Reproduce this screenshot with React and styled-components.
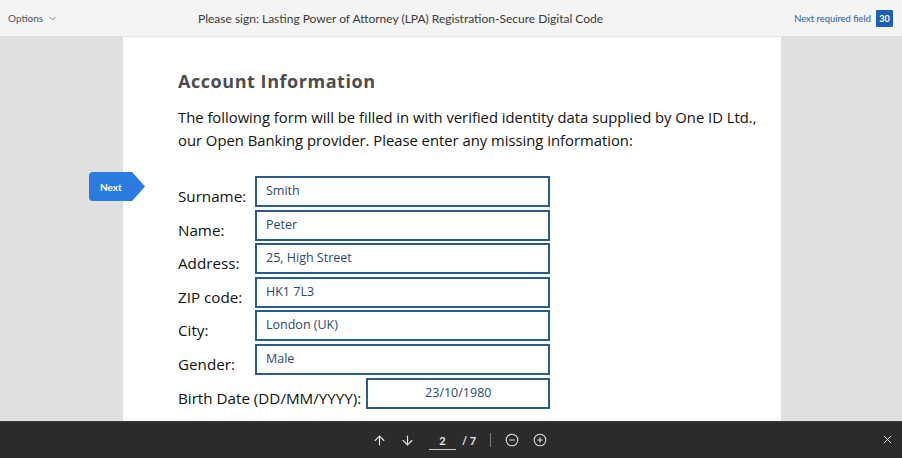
import React from "react";
import styled, { createGlobalStyle } from "styled-components";
import { ArrowUp, ArrowDown, CircleMinus, CirclePlus, X, ChevronDown } from "lucide-react";

const GlobalStyle = createGlobalStyle`
  html, body {
    margin: 0;
    padding: 0;
    width: 902px;
    height: 458px;
    overflow: hidden;
    font-family: Lato, "Open Sans", sans-serif;
  }
`;

const fields = [
  { label: "Surname:", value: "Smith" },
  { label: "Name:", value: "Peter" },
  { label: "Address:", value: "25, High Street" },
  { label: "ZIP code:", value: "HK1 7L3" },
  { label: "City:", value: "London (UK)" },
  { label: "Gender:", value: "Male" },
];

const App = () => {
  return (
    <Shell>
      <GlobalStyle />

      {/* ---------------- TOP BAR ---------------- */}
      <TopBar>
        <Options>
          Options <ChevronDown size={11} strokeWidth={1.6} />
        </Options>
        <Title>Please sign: Lasting Power of Attorney (LPA) Registration-Secure Digital Code</Title>
        <NextField>
          Next required field <Badge>30</Badge>
        </NextField>
      </TopBar>

      {/* ---------------- DOCUMENT ---------------- */}
      <Viewer>
        <Sheet>
          <Heading>Account Information</Heading>
          <Intro>
            The following form will be filled in with verified identity data supplied by One ID Ltd.,
            our Open Banking provider. Please enter any missing information:
          </Intro>

          <Form>
            <NextTag>Next</NextTag>
            {fields.map((f) => (
              <Row key={f.label}>
                <Label>{f.label}</Label>
                <Field>{f.value}</Field>
              </Row>
            ))}
            <Row>
              <Label $wide>Birth Date (DD/MM/YYYY):</Label>
              <Field $center $width={184}>23/10/1980</Field>
            </Row>
          </Form>
        </Sheet>
      </Viewer>

      {/* ---------------- BOTTOM BAR ---------------- */}
      <BottomBar>
        <Controls>
          <IconBtn><ArrowUp size={15} strokeWidth={1.8} /></IconBtn>
          <IconBtn><ArrowDown size={15} strokeWidth={1.8} /></IconBtn>
          <PageBox>2</PageBox>
          <PageTotal>/ 7</PageTotal>
          <Divider />
          <IconBtn><CircleMinus size={14} strokeWidth={1.8} /></IconBtn>
          <IconBtn><CirclePlus size={14} strokeWidth={1.8} /></IconBtn>
        </Controls>
        <Close><X size={13} strokeWidth={1.8} /></Close>
      </BottomBar>
    </Shell>
  );
};

const Shell = styled.div`
  width: 902px;
  height: 458px;
  display: flex;
  flex-direction: column;
  background: #e0e0e0;
`;

/* ================= TOP BAR ================= */
const TopBar = styled.div`
  height: 36px;
  flex-shrink: 0;
  background: #f4f4f4;
  border-bottom: 1px solid #e4e4e4;
  display: flex;
  align-items: center;
  padding: 0 9px 0 8px;
`;

const Options = styled.div`
  font-size: 10px;
  color: #555;
  display: flex;
  align-items: center;
  gap: 4px;
  width: 190px;
`;

const Title = styled.div`
  flex: 1;
  font-size: 12px;
  color: #3a3a3a;
  white-space: nowrap;
`;

const NextField = styled.div`
  font-size: 9.4px;
  color: #2a5f9e;
  display: flex;
  align-items: center;
  gap: 5px;
`;

const Badge = styled.span`
  width: 17px;
  height: 17px;
  background: #1d5fb3;
  color: #fff;
  font-size: 9px;
  font-weight: 700;
  display: flex;
  align-items: center;
  justify-content: center;
  border-radius: 1px;
`;

/* ================= VIEWER ================= */
const Viewer = styled.div`
  flex: 1;
  display: flex;
  padding-left: 123px;
  overflow: hidden;
`;

const Sheet = styled.div`
  width: 603px;
  background: #fff;
  padding: 0 0 0 55px;
`;

const Heading = styled.h2`
  margin: 33px 0 0;
  font-family: "Open Sans", Lato, sans-serif;
  font-size: 18px;
  font-weight: 700;
  letter-spacing: 0.55px;
  color: #4d4d4d;
  line-height: 22px;
`;

const Intro = styled.p`
  margin: 14px 0 0;
  font-family: "Open Sans", Lato, sans-serif;
  font-size: 14.8px;
  line-height: 23px;
  color: #111;
  width: 600px;
`;

const Form = styled.div`
  margin-top: 24px;
  display: flex;
  flex-direction: column;
  gap: 2.6px;
  position: relative;
`;

const Row = styled.div`
  display: flex;
  align-items: flex-end;
`;

const Label = styled.div`
  font-family: "Open Sans", Lato, sans-serif;
  font-size: 15.2px;
  color: #111;
  width: ${(p) => (p.$wide ? "auto" : "77px")};
  white-space: nowrap;
  margin-right: ${(p) => (p.$wide ? "5px" : "0")};
  margin-bottom: 0;
  line-height: 22px;
`;

const Field = styled.div`
  width: ${(p) => p.$width || 295}px;
  height: 31px;
  box-sizing: border-box;
  border: 2px solid #2b5b8b;
  font-family: "Open Sans", Lato, sans-serif;
  font-size: 12.5px;
  color: #2b4a6a;
  padding: 4px 0 0 ${(p) => (p.$center ? 0 : 9)}px;
  text-align: ${(p) => (p.$center ? "center" : "left")};
  flex-shrink: 0;
`;

const NextTag = styled.div`
  position: absolute;
  left: -89px;
  top: -4px;
  width: 56px;
  height: 29px;
  background: #2b7be0;
  color: #fff;
  font-size: 10px;
  font-weight: 700;
  display: flex;
  align-items: center;
  padding-left: 11px;
  box-sizing: border-box;
  border-radius: 4px 0 0 4px;
  clip-path: polygon(0 0, 77% 0, 100% 50%, 77% 100%, 0 100%);
`;

/* ================= BOTTOM BAR ================= */
const BottomBar = styled.div`
  height: 36px;
  flex-shrink: 0;
  background: #2b2b2b;
  border-top: 1px solid #3c3c3c;
  display: flex;
  align-items: center;
  justify-content: center;
  position: relative;
  color: #e6e6e6;
`;

const Controls = styled.div`
  display: flex;
  align-items: center;
  margin-left: 18px;
`;

const IconBtn = styled.span`
  display: flex;
  align-items: center;
  justify-content: center;
  width: 28px;
`;

const PageBox = styled.span`
  width: 27px;
  margin-left: 7px;
  text-align: center;
  font-size: 11px;
  font-weight: 700;
  padding-bottom: 2px;
  border-bottom: 1px solid #cfcfcf;
  margin-top: 4px;
`;

const PageTotal = styled.span`
  font-size: 11px;
  font-weight: 700;
  margin-left: 6px;
  margin-right: 14px;
`;

const Divider = styled.span`
  width: 1px;
  height: 14px;
  background: #777;
  margin-right: 7px;
`;

const Close = styled.span`
  position: absolute;
  right: 8px;
  top: 11px;
  display: flex;
`;

export default App;
